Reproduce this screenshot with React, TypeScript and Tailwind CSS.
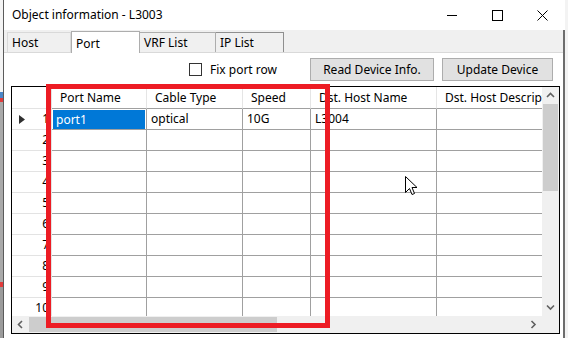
import React from 'react';

const columns = [
  { name: 'Port Name', w: 'w-[95px]' },
  { name: 'Cable Type', w: 'w-[96px]' },
  { name: 'Speed', w: 'w-[68px]' },
  { name: 'Dst. Host Name', w: 'w-[126px]' },
  { name: 'Dst. Host Description', w: 'w-[140px]' },
];

const rows = Array.from({ length: 10 }, (_, i) => ({
  no: i + 1,
  cells: i === 0 ? ['port1', 'optical', '10G', 'L3004', ''] : ['', '', '', '', ''],
}));

function Chevron({ dir }: { dir: 'up' | 'down' | 'left' | 'right' }) {
  const d = {
    up: 'M1 5 L4.5 1.5 L8 5',
    down: 'M1 1.5 L4.5 5 L8 1.5',
    left: 'M5 1 L1.5 4.5 L5 8',
    right: 'M1.5 1 L5 4.5 L1.5 8',
  }[dir];
  const horiz = dir === 'up' || dir === 'down';
  return (
    <svg width={horiz ? 9 : 7} height={horiz ? 7 : 9} viewBox={horiz ? '0 0 9 7' : '0 0 7 9'}>
      <path d={d} fill="none" stroke="#606060" strokeWidth="1.6" />
    </svg>
  );
}

export default function App() {
  return (
    <div
      className="relative flex w-[568px] h-[338px] overflow-hidden bg-white text-[12px] text-black"
      style={{ fontFamily: '"Noto Sans", "Liberation Sans", sans-serif' }}
    >
      {/* desktop behind the window */}
      <div className="flex flex-col w-[3px] bg-[#c9c9c9]">
        <div className="h-[92px] bg-[#f4f4f4]" />
        <div className="h-[6px] bg-[#4a86c8]" />
        <div className="h-[4px] bg-[#e23b3b]" />
        <div className="h-[180px] bg-[#a9a9a9]" />
        <div className="h-[5px] bg-[#e23b3b]" />
        <div className="flex-1 bg-[#9b9b9b]" />
      </div>

      {/* window */}
      <div className="flex flex-col w-[562px] border-l border-[#5b5b5b]">
        {/* title bar */}
        <div className="flex items-center h-[30px] bg-white">
          <span className="pl-[8px] flex-1 leading-none">Object information - L3003</span>
          <div className="flex items-center justify-center w-[45px] h-[30px]">
            <svg width="11" height="11" viewBox="0 0 11 11">
              <path d="M0 5.5 H10" stroke="#000" strokeWidth="1" />
            </svg>
          </div>
          <div className="flex items-center justify-center w-[45px] h-[30px]">
            <svg width="11" height="11" viewBox="0 0 11 11">
              <rect x="0.5" y="0.5" width="10" height="10" fill="none" stroke="#000" strokeWidth="1" />
            </svg>
          </div>
          <div className="flex items-center justify-center w-[45px] h-[30px]">
            <svg width="11" height="11" viewBox="0 0 11 11">
              <path d="M0.5 0.5 L10.5 10.5 M10.5 0.5 L0.5 10.5" stroke="#000" strokeWidth="1" />
            </svg>
          </div>
        </div>

        <div className="flex flex-1">
          <div className="flex flex-col w-[559px]">
            {/* tab strip */}
            <div className="flex items-end h-[23px] pl-[3px] bg-[#f0f0f0] border-b border-[#d9d9d9]">
              <div className="flex items-center w-[64px] h-[20px] pl-[4px] border border-b-0 border-[#d9d9d9] bg-[#f0f0f0]">
                Host
              </div>
              <div className="relative z-10 flex items-center w-[69px] h-[22px] -mb-px pl-[4px] pt-[2px] bg-white border border-b-0 border-[#adadad]">
                Port
              </div>
              <div className="flex items-center w-[76px] h-[20px] pl-[4px] border border-b-0 border-l-0 border-[#adadad] bg-[#f0f0f0]">
                VRF List
              </div>
              <div className="flex items-center w-[68px] h-[20px] pl-[4px] border border-b-0 border-l-0 border-[#8f8f8f] bg-[#f0f0f0]">
                IP List
              </div>
            </div>

            {/* page */}
            <div className="flex flex-col flex-1 bg-white">
              <div className="flex items-center justify-end h-[33px] pr-[10px] gap-[8px]">
                <label className="flex items-center gap-[8px] mr-[25px]">
                  <span className="w-[13px] h-[13px] border border-[#333] bg-white" />
                  <span>Fix port row</span>
                </label>
                <button className="w-[124px] h-[23px] border border-[#adadad] bg-[#e1e1e1]">Read Device Info.</button>
                <button className="w-[111px] h-[23px] border border-[#adadad] bg-[#e1e1e1]">Update Device</button>
              </div>

              {/* data grid */}
              <div className="flex flex-col ml-[7px] w-[549px] h-[248px] border border-black">
                <div className="flex h-[229px]">
                  <div className="flex-1 overflow-hidden bg-white">
                    <div className="flex w-max h-[22px]">
                      <div className="w-[40px] border-r border-b border-[#e3e3e3]" />
                      {columns.map((c) => (
                        <div
                          key={c.name}
                          className={`${c.w} shrink-0 flex items-center pl-[8px] whitespace-nowrap border-r border-[#e5e5e5] border-b border-b-[#a0a0a0]`}
                        >
                          {c.name}
                        </div>
                      ))}
                    </div>
                    {rows.map((r) => (
                      <div key={r.no} className="flex w-max h-[21px]">
                        <div className="relative flex items-center justify-end w-[40px] pr-[2px] border-r border-b border-[#e3e3e3]">
                          {r.no === 1 && (
                            <svg className="absolute left-[7px] top-[6px]" width="6" height="9" viewBox="0 0 6 9">
                              <path d="M0 0 L6 4.5 L0 9 Z" fill="#303030" />
                            </svg>
                          )}
                          {r.no}
                        </div>
                        {r.cells.map((v, i) => (
                          <div
                            key={i}
                            className={`${columns[i].w} shrink-0 flex items-center border-r border-b border-[#a0a0a0] ${
                              r.no === 1 && i === 0 ? 'pl-[1px] pr-px pt-px' : 'pl-[4px]'
                            }`}
                          >
                            {r.no === 1 && i === 0 ? (
                              <div className="flex items-center w-full h-full pl-[3px] bg-[#0078d7] text-white">{v}</div>
                            ) : (
                              v
                            )}
                          </div>
                        ))}
                      </div>
                    ))}
                  </div>

                  {/* vertical scrollbar */}
                  <div className="flex flex-col w-[17px] bg-[#f0f0f0]">
                    <div className="flex items-center justify-center h-[17px]">
                      <Chevron dir="up" />
                    </div>
                    <div className="mx-px h-[87px] bg-[#cdcdcd]" />
                    <div className="flex-1" />
                    <div className="flex items-center justify-center h-[17px]">
                      <Chevron dir="down" />
                    </div>
                  </div>
                </div>

                {/* horizontal scrollbar */}
                <div className="flex h-[17px] bg-[#f0f0f0]">
                  <div className="flex items-center justify-center w-[17px]">
                    <Chevron dir="left" />
                  </div>
                  <div className="my-px w-[248px] bg-[#cdcdcd]" />
                  <div className="flex-1" />
                  <div className="flex items-center justify-center w-[17px]">
                    <Chevron dir="right" />
                  </div>
                  <div className="w-[17px] bg-[#f0f0f0]" />
                </div>
              </div>
            </div>
          </div>
          <div className="w-[2px] bg-[#6d6d6d]" />
        </div>
      </div>
      <div className="w-[3px] bg-[#f3f3f3]" />

      {/* annotation */}
      <div className="absolute left-[46px] top-[84px] w-[284px] h-[244px] border-[5px] border-[#ed1c24]" />

      {/* mouse pointer */}
      <svg className="absolute left-[405px] top-[176px]" width="13" height="21" viewBox="0 0 13 21">
        <path
          d="M0.5 0.5 L0.5 16.5 L4.5 12.5 L7 18.5 L9.5 17.5 L7 11.5 L12 11.5 Z"
          fill="#fff"
          stroke="#000"
          strokeWidth="1"
          strokeLinejoin="miter"
        />
      </svg>
    </div>
  );
}
